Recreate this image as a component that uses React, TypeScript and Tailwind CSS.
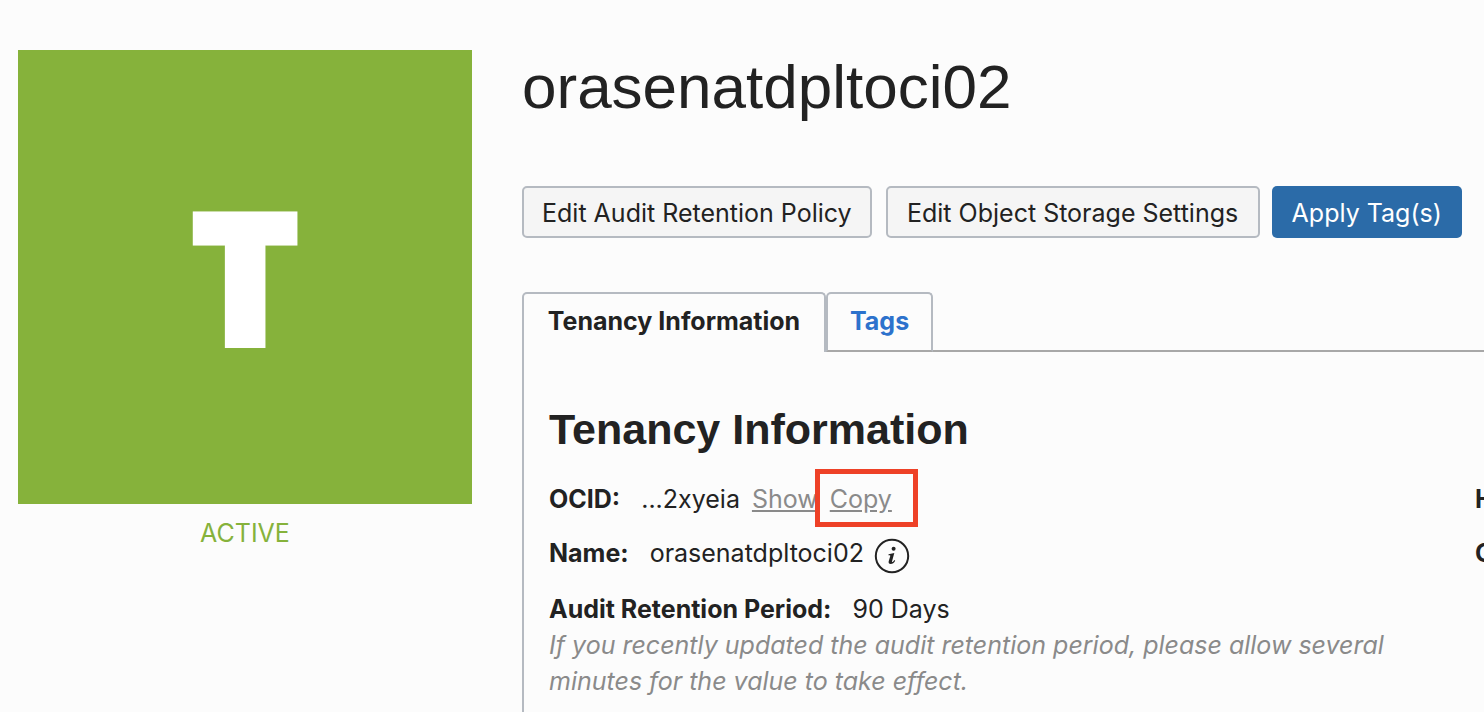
import type { ReactNode } from "react";

function Field({ label, children }: { label: string; children: ReactNode }) {
  return (
    <div className="flex items-center whitespace-nowrap leading-9">
      <dt className="mr-[21px] font-bold">{label}</dt>
      <dd className="flex items-center">{children}</dd>
    </div>
  );
}

function InfoIcon() {
  return (
    <svg viewBox="0 0 36 36" className="size-9" fill="none" aria-hidden="true">
      <circle cx="18" cy="18" r="16.2" stroke="#222222" strokeWidth="2" />
      <circle cx="19.6" cy="10.8" r="2" fill="#222222" />
      <path
        d="M14.6 16.300L20.300 15.100L18 23.400C17.800 24.200 18.300 24.300 18.900 23.800C19.500 23.300 20 22.700 20.400 22.100L21.200 22.700C20 24.900 18.500 26 16.700 26C15 26 14.300 24.900 14.700 23.300L16.300 17.900C16.400 17.400 16.200 17.200 15.600 17.200H14.400Z"
        fill="#222222"
      />
    </svg>
  );
}

const secondaryButton =
  "h-[52px] rounded-[5px] border-2 border-[#b5bac1] bg-[#f5f5f5] px-[18px] pt-[3px] whitespace-nowrap";

export default function App() {
  return (
    <div className="flex min-h-screen gap-[50px] overflow-hidden bg-[#fcfcfc] pl-[18px] font-['Inter','Liberation_Sans',sans-serif] text-[25px] text-[#222222]">
      <aside className="w-[454px] shrink-0 pt-[50px]">
        <div className="flex aspect-square items-center justify-center bg-[#86b23b] pb-1 font-['Open_Sans',sans-serif] text-[184px] leading-none font-extrabold text-white [-webkit-text-stroke:5px_white]">
          T
        </div>
        <p className="mt-[11px] text-center leading-9 text-[#86b23b]">ACTIVE</p>
      </aside>

      <main className="flex min-w-0 flex-1 flex-col pt-[50px]">
        <h1 className="font-['Liberation_Sans',sans-serif] text-[62px] leading-[74px]">
          orasenatdpltoci02
        </h1>

        <div className="mt-[62px] flex">
          <button type="button" className={secondaryButton}>
            Edit Audit Retention Policy
          </button>
          <button type="button" className={`ml-[14px] min-w-[374px] ${secondaryButton}`}>
            Edit Object Storage Settings
          </button>
          <button
            type="button"
            className="ml-3 h-[52px] rounded-[5px] bg-[#2b6ba8] px-5 pt-[3px] whitespace-nowrap text-white"
          >
            Apply Tag(s)
          </button>
        </div>

        <div role="tablist" className="mt-[54px] flex h-[60px] font-bold">
          <button
            type="button"
            role="tab"
            aria-selected="true"
            className="min-w-[304px] rounded-t-[5px] border-2 border-b-0 border-[#b5bac1] px-[22px] pb-0.5 whitespace-nowrap"
          >
            Tenancy Information
          </button>
          <button
            type="button"
            role="tab"
            aria-selected="false"
            className="rounded-t-[5px] border-2 border-[#b5bac1] border-b-[#a8a8a8] px-[22px] text-[#2d72cc]"
          >
            Tags
          </button>
          <div className="flex-1 border-b-2 border-[#a8a8a8]" />
        </div>

        <section
          role="tabpanel"
          className="flex flex-1 border-l-2 border-[#b5bac1] pt-[51px] pl-[25px]"
        >
          <div className="min-w-0 flex-1">
            <h2 className="font-['Liberation_Sans',sans-serif] text-[43px] leading-[52px] font-bold">
              Tenancy Information
            </h2>
            <dl className="mt-[26px]">
              <Field label="OCID:">
                <span>...2xyeia</span>
                <a href="#show" className="ml-3 text-[#8a8a8a] underline">
                  Show
                </a>
                <span className="relative ml-3">
                  <a href="#copy" className="text-[#8a8a8a] underline">
                    Copy
                  </a>
                  <span className="pointer-events-none absolute -top-3 -right-[26px] -bottom-[10px] -left-[15px] border-[5px] border-[#ee4127]" />
                </span>
              </Field>
              <div className="mt-[18px]">
                <Field label="Name:">
                  <span>orasenatdpltoci02</span>
                  <button type="button" aria-label="About the name" className="mt-[3px] -mb-[3px] ml-[10px]">
                    <InfoIcon />
                  </button>
                </Field>
              </div>
              <div className="mt-5">
                <Field label="Audit Retention Period:">90 Days</Field>
              </div>
            </dl>
            <p className="pr-8 leading-9 text-[#8a8a8a] italic">
              If you recently updated the audit retention period, please allow several minutes for
              the value to take effect.
            </p>
          </div>
          <div className="w-[9px] shrink-0 overflow-hidden pt-[78px] leading-9 font-bold">
            <p>H</p>
            <p className="mt-[18px]">C</p>
          </div>
        </section>
      </main>
    </div>
  );
}
